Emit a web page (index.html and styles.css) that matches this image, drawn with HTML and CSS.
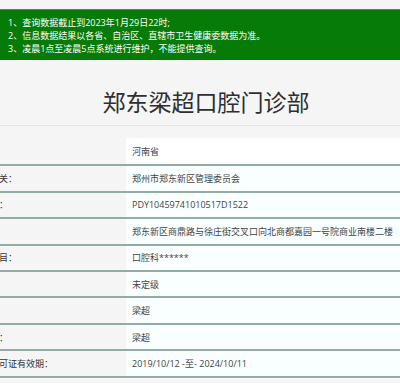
FILE: index.html
```html
<!DOCTYPE html>
<html lang="zh-CN">
<head>
<meta charset="utf-8">
<link rel="stylesheet" href="styles.css">
</head>
<body>
<div class="page">
  <div class="notice">
    <p>1、查询数据截止到2023年1月29日22时;</p>
    <p>2、信息数据结果以各省、自治区、直辖市卫生健康委数据为准。</p>
    <p>3、凌晨1点至凌晨5点系统进行维护，不能提供查询。</p>
  </div>
  <h1 class="title">郑东梁超口腔门诊部</h1>
  <div class="table">
    <div class="row first"><div class="label">省份：</div><div class="value">河南省</div></div>
    <div class="row"><div class="label">发证机关：</div><div class="value">郑州市郑东新区管理委员会</div></div>
    <div class="row"><div class="label">登记号：</div><div class="value">PDY10459741010517D1522</div></div>
    <div class="row"><div class="label">地址：</div><div class="value">郑东新区商鼎路与徐庄街交叉口向北商都嘉园一号院商业南楼二楼</div></div>
    <div class="row"><div class="label">诊疗科目：</div><div class="value">口腔科******</div></div>
    <div class="row"><div class="label">等级：</div><div class="value">未定级</div></div>
    <div class="row"><div class="label">法人：</div><div class="value">梁超</div></div>
    <div class="row"><div class="label">负责人：</div><div class="value">梁超</div></div>
    <div class="row"><div class="label">执业许可证有效期：</div><div class="value">2019/10/12 -至- 2024/10/11</div></div>
  </div>
</div>
</body>
</html>
```
FILE: styles.css
```css
html, body {
  margin: 0;
  padding: 0;
  background: #f5f5f5;
  overflow: hidden;
}
.page {
  padding-top: 9px;
  font-family: "Open Sans", "Noto Sans CJK SC", sans-serif;
  color: #333;
}
.notice {
  background: #077b07;
  border-top: 1px solid #3f9a3f;
  color: #fff;
  font-size: 9px;
  line-height: 13px;
  padding: 6px 8px 5px;
}
.notice p {
  margin: 0;
  white-space: nowrap;
}
.title {
  margin: 0;
  padding: 26px 0 9px 12px;
  font-family: "Noto Sans CJK SC", sans-serif;
  font-weight: normal;
  font-size: 23px;
  line-height: 30px;
  text-align: center;
  color: #2f2f2f;
  border-bottom: 1px solid #e6e6e6;
}
.table {
  margin-top: 12px;
  margin-left: -36px;
  width: calc(100% + 36px);
  font-size: 9px;
}
.row {
  display: grid;
  grid-template-columns: 162px 1fr;
  height: 24.45px;
  border-bottom: 2px solid #93aba5;
}
.row.first {
  height: 26.3px;
}
.label {
  display: flex;
  align-items: center;
  padding-left: 8px;
  white-space: nowrap;
  color: #333;
}
.value {
  display: flex;
  align-items: center;
  padding-left: 6px;
  background: #f9fefe;
  white-space: nowrap;
  color: #444;
}
.row.first .value {
  background: #fff;
}
```
